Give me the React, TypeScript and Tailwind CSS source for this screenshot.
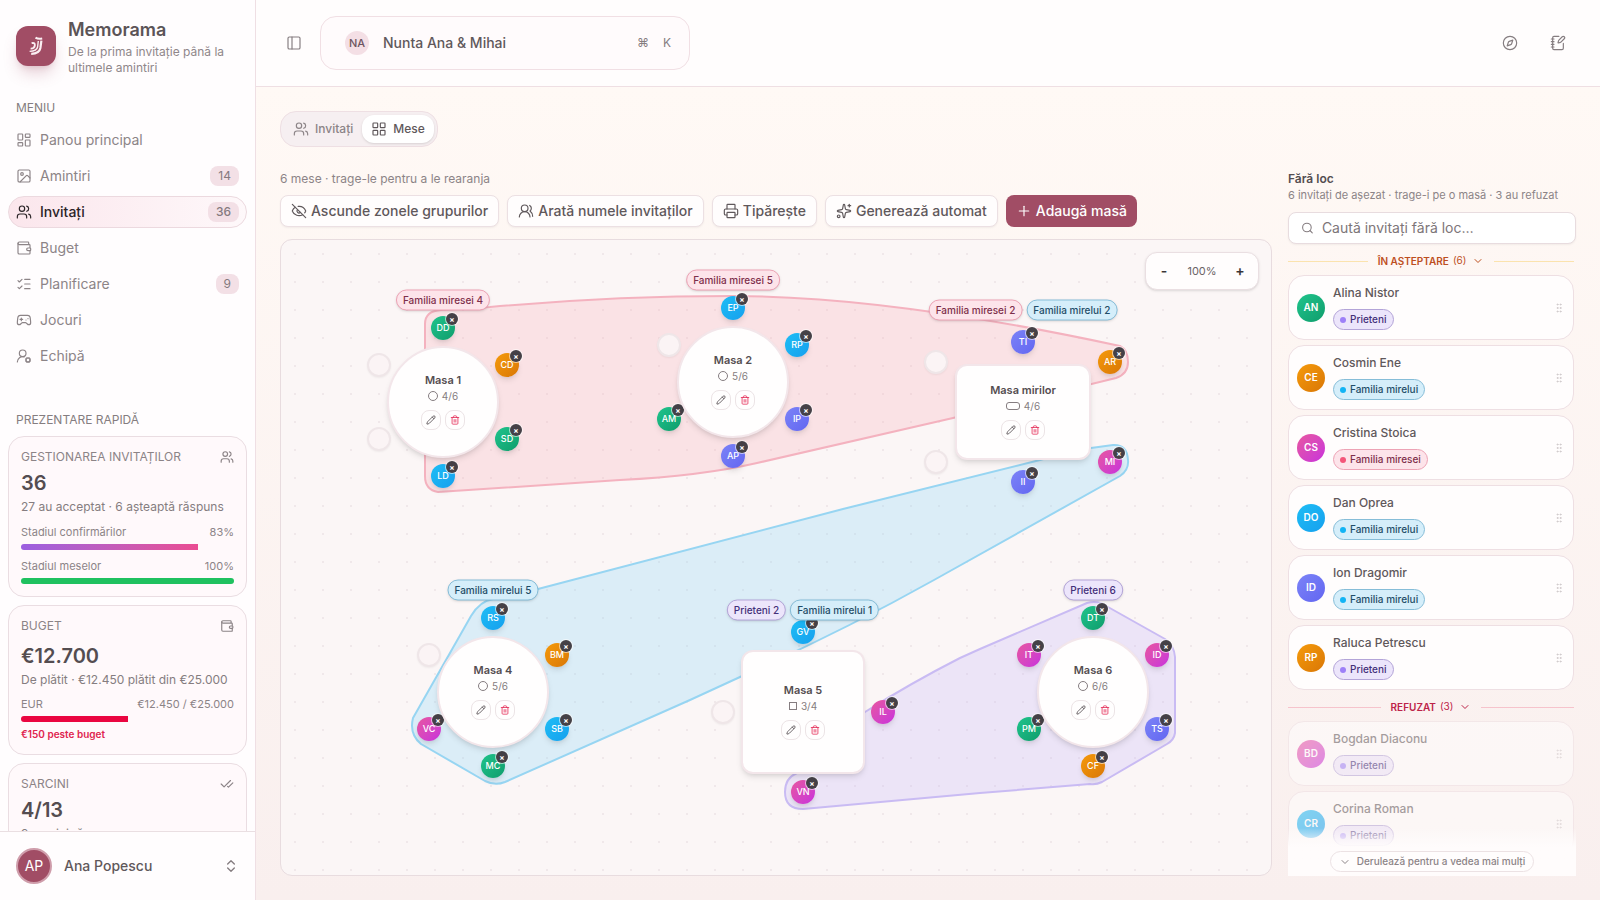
import type { ReactNode } from 'react';
import clsx from 'clsx';
import {
  CheckCheck,
  ChevronDown,
  ChevronsUpDown,
  Compass,
  EyeOff,
  Gamepad2,
  GripVertical,
  Image,
  LayoutDashboard,
  LayoutGrid,
  ListChecks,
  NotebookPen,
  PanelLeft,
  Pencil,
  Plus,
  Printer,
  Search,
  Sparkles,
  Trash2,
  UserRoundCog,
  Users,
  UsersRound,
  Wallet,
  type LucideIcon,
} from 'lucide-react';

type Color = 'green' | 'orange' | 'sky' | 'indigo' | 'pink';
type GroupKey = 'miresei' | 'mirelui' | 'prieteni';

const avatarColors: Record<Color, string> = {
  green: 'from-[#20c48c] to-[#0f9d6c]',
  orange: 'from-[#f59a0b] to-[#d97706]',
  sky: 'from-[#1fbdf5] to-[#16a0ee]',
  indigo: 'from-[#7c83f7] to-[#6366f1]',
  pink: 'from-[#e8559f] to-[#c92fdc]',
};

const groups: Record<GroupKey, { name: string; pill: string; dot: string }> = {
  miresei: {
    name: 'Familia miresei',
    pill: 'bg-[#fde4ea] border-[#eda3b5] text-[#7d2f4b]',
    dot: 'bg-[#f4567a]',
  },
  mirelui: {
    name: 'Familia mirelui',
    pill: 'bg-[#d5eefa] border-[#86bdd8] text-[#1f4d68]',
    dot: 'bg-[#12b4f5]',
  },
  prieteni: {
    name: 'Prieteni',
    pill: 'bg-[#ece5fb] border-[#b3a4d8] text-[#432f79]',
    dot: 'bg-[#9d80f8]',
  },
};

interface NavItem {
  label: string;
  icon: LucideIcon;
  count?: number;
  active?: boolean;
}

const navItems: NavItem[] = [
  { label: 'Panou principal', icon: LayoutDashboard },
  { label: 'Amintiri', icon: Image, count: 14 },
  { label: 'Invitați', icon: Users, count: 36, active: true },
  { label: 'Buget', icon: Wallet },
  { label: 'Planificare', icon: ListChecks, count: 9 },
  { label: 'Jocuri', icon: Gamepad2 },
  { label: 'Echipă', icon: UserRoundCog },
];

interface Seat {
  x: number;
  y: number;
  initials?: string;
  color?: Color;
}

interface TableData {
  name: string;
  shape: 'round' | 'rect' | 'square';
  x: number;
  y: number;
  taken: string;
  labels: { group: GroupKey; count: number }[];
  seats: Seat[];
}

// seat positions are relative to the table centre
const tables: TableData[] = [
  {
    name: 'Masa 1', shape: 'round', x: 162, y: 162, taken: '4/6',
    labels: [{ group: 'miresei', count: 4 }],
    seats: [
      { x: 0, y: -74, initials: 'DD', color: 'green' },
      { x: 64, y: -37, initials: 'CD', color: 'orange' },
      { x: 64, y: 37, initials: 'SD', color: 'green' },
      { x: 0, y: 74, initials: 'LD', color: 'sky' },
      { x: -64, y: 37 },
      { x: -64, y: -37 },
    ],
  },
  {
    name: 'Masa 2', shape: 'round', x: 452, y: 142, taken: '5/6',
    labels: [{ group: 'miresei', count: 5 }],
    seats: [
      { x: 0, y: -74, initials: 'EP', color: 'sky' },
      { x: 64, y: -37, initials: 'RP', color: 'sky' },
      { x: 64, y: 37, initials: 'IP', color: 'indigo' },
      { x: 0, y: 74, initials: 'AP', color: 'indigo' },
      { x: -64, y: 37, initials: 'AM', color: 'green' },
      { x: -64, y: -37 },
    ],
  },
  {
    name: 'Masa mirilor', shape: 'rect', x: 742, y: 172, taken: '4/6',
    labels: [{ group: 'miresei', count: 2 }, { group: 'mirelui', count: 2 }],
    seats: [
      { x: 0, y: -70, initials: 'TI', color: 'indigo' },
      { x: 87, y: -50, initials: 'AR', color: 'orange' },
      { x: 87, y: 50, initials: 'MI', color: 'pink' },
      { x: 0, y: 70, initials: 'II', color: 'indigo' },
      { x: -87, y: 50 },
      { x: -87, y: -50 },
    ],
  },
  {
    name: 'Masa 4', shape: 'round', x: 212, y: 452, taken: '5/6',
    labels: [{ group: 'mirelui', count: 5 }],
    seats: [
      { x: 0, y: -74, initials: 'RS', color: 'sky' },
      { x: 64, y: -37, initials: 'BM', color: 'orange' },
      { x: 64, y: 37, initials: 'SB', color: 'sky' },
      { x: 0, y: 74, initials: 'MC', color: 'green' },
      { x: -64, y: 37, initials: 'VC', color: 'pink' },
      { x: -64, y: -37 },
    ],
  },
  {
    name: 'Masa 5', shape: 'square', x: 522, y: 472, taken: '3/4',
    labels: [{ group: 'prieteni', count: 2 }, { group: 'mirelui', count: 1 }],
    seats: [
      { x: 0, y: -80, initials: 'GV', color: 'sky' },
      { x: 80, y: 0, initials: 'IL', color: 'pink' },
      { x: 0, y: 80, initials: 'VN', color: 'pink' },
      { x: -80, y: 0 },
    ],
  },
  {
    name: 'Masa 6', shape: 'round', x: 812, y: 452, taken: '6/6',
    labels: [{ group: 'prieteni', count: 6 }],
    seats: [
      { x: 0, y: -74, initials: 'DT', color: 'green' },
      { x: 64, y: -37, initials: 'ID', color: 'pink' },
      { x: 64, y: 37, initials: 'TS', color: 'indigo' },
      { x: 0, y: 74, initials: 'CF', color: 'orange' },
      { x: -64, y: 37, initials: 'PM', color: 'green' },
      { x: -64, y: -37, initials: 'IT', color: 'pink' },
    ],
  },
];

interface Guest {
  name: string;
  initials: string;
  color: Color;
  group: GroupKey;
}

const pendingGuests: Guest[] = [
  { name: 'Alina Nistor', initials: 'AN', color: 'green', group: 'prieteni' },
  { name: 'Cosmin Ene', initials: 'CE', color: 'orange', group: 'mirelui' },
  { name: 'Cristina Stoica', initials: 'CS', color: 'pink', group: 'miresei' },
  { name: 'Dan Oprea', initials: 'DO', color: 'sky', group: 'mirelui' },
  { name: 'Ion Dragomir', initials: 'ID', color: 'indigo', group: 'mirelui' },
  { name: 'Raluca Petrescu', initials: 'RP', color: 'orange', group: 'prieteni' },
];

const declinedGuests: Guest[] = [
  { name: 'Bogdan Diaconu', initials: 'BD', color: 'pink', group: 'prieteni' },
  { name: 'Corina Roman', initials: 'CR', color: 'sky', group: 'prieteni' },
];

const Logo = () => (
  <div className="flex size-10 shrink-0 items-center justify-center rounded-xl bg-[#a14d65] shadow-lg shadow-[#a14d65]/25">
    <svg viewBox="0 0 16 20" className="h-5 w-4" fill="none" stroke="#fbeef2">
      <path d="M7.5 1.6 Q10 3.4 14.2 2.6" strokeWidth="2" />
      <path d="M13.4 4.6 L12.4 12 Q11.4 17.6 3.2 17.8" strokeWidth="2.2" />
      <path d="M10.3 5 L9.6 11 Q8.8 15 1.6 15.4" strokeWidth="1.4" />
      <path d="M3.6 7.2 Q7.2 6.2 6.8 9.6 Q6.2 12.8 2.6 12.6" strokeWidth="1.9" />
    </svg>
  </div>
);

interface StatCardProps {
  title: string;
  icon: LucideIcon;
  value: string;
  spaced?: boolean;
  children: ReactNode;
}

const StatCard = ({ title, icon: Icon, value, spaced, children }: StatCardProps) => (
  <section className="rounded-2xl border border-[#eadde2] bg-[#fff9fb] p-3">
    <div className="flex items-center justify-between text-[#8c8487]">
      <h3 className="text-xs">{title}</h3>
      <Icon className="size-3.5" />
    </div>
    <p className={clsx('text-xl leading-7 font-semibold text-[#544d50]', spaced ? 'mt-2' : 'mt-1')}>{value}</p>
    {children}
  </section>
);

const Sidebar = () => (
  <aside className="sticky top-0 flex h-screen w-64 shrink-0 flex-col border-r border-[#efdfe4] bg-[#fffdfe]">
    <div className="flex items-center gap-3 px-4 pt-4">
      <Logo />
      <div>
        <h1 className="text-lg leading-7 font-semibold text-[#5b5457]">Memorama</h1>
        <p className="text-xs text-[#8f878a]">De la prima invitație până la ultimele amintiri</p>
      </div>
    </div>

    <h2 className="mt-6 px-4 text-xs leading-4 text-[#857d80]">MENIU</h2>
    <nav className="mt-2 flex flex-col gap-1 px-2">
      {navItems.map(({ label, icon: Icon, count, active }) => (
        <a
          key={label}
          href="#"
          className={clsx(
            'flex h-8 items-center gap-2 rounded-2xl border px-[7px] text-sm',
            active
              ? 'border-[#ecd9df] bg-linear-to-r from-[#fbe6ec] to-[#fef8fa] font-medium text-[#2b2427]'
              : 'border-transparent text-[#8c8487]'
          )}
        >
          <Icon className="size-4" strokeWidth={1.75} />
          <span className="flex-1">{label}</span>
          {count && (
            <span className="rounded-lg bg-[#f3e0e6] px-2 text-xs leading-5 text-[#857a7e]">{count}</span>
          )}
        </a>
      ))}
    </nav>

    <h2 className="mt-10 px-4 text-xs leading-4 text-[#857d80]">PREZENTARE RAPIDĂ</h2>
    <div className="mt-2 flex min-h-0 flex-1 flex-col gap-2 overflow-hidden px-2">
      <StatCard title="GESTIONAREA INVITAȚILOR" icon={Users} value="36">
        <p className="mt-0.5 text-xs text-[#857d80]">27 au acceptat · 6 așteaptă răspuns</p>
        <div className="mt-[9px] flex justify-between text-[11px] leading-4 text-[#8c8487]">
          <span>Stadiul confirmărilor</span>
          <span>83%</span>
        </div>
        <div className="mt-1 h-1.5 overflow-hidden rounded-full">
          <div className="h-full w-[83%] bg-linear-to-r from-[#9b5fe0] to-[#ea4c92]" />
        </div>
        <div className="mt-2 flex justify-between text-[11px] leading-4 text-[#8c8487]">
          <span>Stadiul meselor</span>
          <span>100%</span>
        </div>
        <div className="mt-1 h-1.5 rounded-full bg-[#1fc15f]" />
      </StatCard>
      <StatCard title="BUGET" icon={Wallet} value="€12.700" spaced>
        <p className="mt-0.5 text-xs text-[#857d80]">De plătit · €12.450 plătit din €25.000</p>
        <div className="mt-2 flex justify-between text-[11px] leading-4 text-[#8c8487]">
          <span>EUR</span>
          <span>€12.450 / €25.000</span>
        </div>
        <div className="mt-1 h-1.5 overflow-hidden rounded-full">
          <div className="h-full w-1/2 bg-[#ea0640]" />
        </div>
        <p className="mt-1 text-[10px] leading-4 font-semibold text-[#e0244f]">€150 peste buget</p>
      </StatCard>
      <StatCard title="SARCINI" icon={CheckCheck} value="4/13">
        <p className="mt-0.5 text-xs text-[#857d80]">9 sarcini rămase</p>
      </StatCard>
    </div>

    <button className="flex h-[69px] shrink-0 items-center gap-3 border-t border-[#eadfe2] bg-[#fffdfe] px-4 text-left">
      <span className="flex size-9 items-center justify-center rounded-full border-2 border-[#cf9dab] bg-[#a14d65] text-sm text-white">AP</span>
      <span className="flex-1 text-sm font-medium text-[#5f585b]">Ana Popescu</span>
      <ChevronsUpDown className="size-4 text-[#857d80]" />
    </button>
  </aside>
);

const Header = () => (
  <header className="flex h-[87px] items-center border-b border-[#efdfe3] bg-[#fffdfd] pr-[26px] pl-6">
    <button aria-label="Comută bara laterală" className="flex size-7 items-center justify-center text-[#857d80]">
      <PanelLeft className="size-4" strokeWidth={1.75} />
    </button>
    <button className="ml-3 flex h-[54px] w-[370px] items-center rounded-2xl border border-[#f1dfe4] bg-[#fffbfc] pr-2.5 pl-6">
      <span className="flex size-6 items-center justify-center rounded-full bg-[#f4dfe5] text-[11px] font-medium text-[#6d5560]">NA</span>
      <span className="ml-3.5 flex-1 text-left text-sm font-medium text-[#5f585b]">Nunta Ana &amp; Mihai</span>
      <kbd className="w-6 text-center font-[Inter] text-xs text-[#857d80]">⌘</kbd>
      <kbd className="w-6 text-center font-[Inter] text-xs text-[#857d80]">K</kbd>
    </button>
    <div className="ml-auto flex gap-4 text-[#857d80]">
      <button aria-label="Tur ghidat" className="flex size-8 items-center justify-center">
        <Compass className="size-4" strokeWidth={1.75} />
      </button>
      <button aria-label="Notițe" className="flex size-8 items-center justify-center">
        <NotebookPen className="size-4" strokeWidth={1.75} />
      </button>
    </div>
  </header>
);

const ToolButton = ({ icon: Icon, label }: { icon: LucideIcon; label: string }) => (
  <button className="flex h-8 items-center gap-1 rounded-lg border border-[#ece0e3] bg-[#fffdfd] px-2.5 text-sm font-medium text-[#5f585b] shadow-xs">
    <Icon className="size-4" strokeWidth={1.75} />
    {label}
  </button>
);

const GroupZones = () => (
  <svg className="absolute top-0 left-0 h-[636px] w-[992px]" strokeWidth="2" strokeLinejoin="round">
    <path
      d="M144 84 Q144 71 160 70 L209 67 Q330 56 452 56 C570 56 700 76 839 106 Q847 110 847 122 Q847 134 835 138 L672 178 L476 223 Q420 236 339 240 L157 252 Q144 250 144 236 Z"
      fill="#f7a8b4"
      fillOpacity="0.25"
      stroke="#f4b2bf"
    />
    <path
      d="M190 376 L132 478 Q128 494 140 504 L204 541 Q214 546 224 542 L409 460 L459 437 Q560 392 653 340 L839 236 Q848 230 847 220 Q846 204 832 205 L810 208 Q785 212 759 220 L562 269 L257 349 L212 359 Q199 361 190 376 Z"
      fill="#7dd3fc"
      fillOpacity="0.25"
      stroke="#97d5f2"
    />
    <path
      d="M504 552 Q504 538 516 533 L584 472 Q630 443 679 418 L699 409 L806 363 Q818 360 827 367 L884 399 Q893 405 894 417 L894 493 Q893 500 886 504 L821 542 Q815 545 809 544 L699 553 L522 569 Q504 569 504 552 Z"
      fill="#c4b5fd"
      fillOpacity="0.27"
      stroke="#c9bbf3"
    />
  </svg>
);

const SeatDot = ({ seat }: { seat: Seat }) => (
  <div className="absolute size-6 -translate-1/2" style={{ left: seat.x, top: seat.y }}>
    {seat.initials && seat.color ? (
      <>
        <span
          className={clsx(
            'flex size-6 items-center justify-center rounded-full bg-linear-to-br text-[9px] font-medium text-white shadow-md',
            avatarColors[seat.color]
          )}
        >
          {seat.initials}
        </span>
        <button
          aria-label={`Elimină ${seat.initials}`}
          className="absolute -top-[3px] -right-[3px] flex size-3 items-center justify-center rounded-full bg-[#454147] text-[8px] leading-none font-semibold text-white ring-1 ring-white/60"
        >
          ×
        </button>
      </>
    ) : (
      <span className="block size-6 rounded-full border-2 border-[#efe6e8] bg-[#fbf4f5] shadow-xs" />
    )}
  </div>
);

const SeatTable = ({ table }: { table: TableData }) => (
  <div className="absolute size-0" style={{ left: table.x, top: table.y }}>
    {table.seats.map((seat, i) => (
      <SeatDot key={i} seat={seat} />
    ))}
    <div
      className={clsx(
        'absolute flex -translate-1/2 flex-col items-center justify-center border-2 border-[#f3e6ea] bg-[#fffefe] pb-0.5 shadow-md',
        table.shape === 'round' && 'size-28 rounded-full',
        table.shape === 'rect' && 'h-24 w-[136px] rounded-xl',
        table.shape === 'square' && 'size-[124px] rounded-xl'
      )}
    >
      <p className="text-[11px] leading-4 font-semibold text-[#544d50]">{table.name}</p>
      <p className="flex items-center gap-1 text-[10px] leading-4 text-[#857d80]">
        <span
          className={clsx(
            'border border-[#857d80]',
            table.shape === 'round' && 'size-2.5 rounded-full',
            table.shape === 'rect' && 'h-2 w-3.5 rounded-[3px]',
            table.shape === 'square' && 'size-2'
          )}
        />
        {table.taken}
      </p>
      <div className="mt-1.5 flex gap-1">
        <button aria-label={`Editează ${table.name}`} className="flex size-5 items-center justify-center rounded-lg border border-[#ece4e6] text-[#544d50]">
          <Pencil className="size-2.5" />
        </button>
        <button aria-label={`Șterge ${table.name}`} className="flex size-5 items-center justify-center rounded-lg border border-[#ece4e6] text-[#e5335c]">
          <Trash2 className="size-2.5" />
        </button>
      </div>
    </div>
    <div className="absolute -top-[102px] flex -translate-1/2 gap-1">
      {table.labels.map(({ group, count }) => (
        <span
          key={group}
          className={clsx('flex h-[21px] items-center rounded-full border px-1.5 text-[10px] font-medium whitespace-nowrap shadow-sm', groups[group].pill)}
        >
          {groups[group].name} {count}
        </span>
      ))}
    </div>
  </div>
);

const FloorPlan = () => (
  <div className="relative mt-3 min-h-[600px] flex-1 overflow-hidden rounded-xl border border-[#e8dcdf] bg-[#fbf6f6] bg-[radial-gradient(circle,#f0e8ea_1px,transparent_1px)] bg-size-[28px_28px]">
    <GroupZones />
    {tables.map((table) => (
      <SeatTable key={table.name} table={table} />
    ))}
    <div className="absolute top-3 right-3 flex h-[38px] items-center rounded-xl border border-[#eadfe2] bg-[#fffdfd] px-1.5 text-xs shadow-sm">
      <button aria-label="Micșorează" className="size-6 text-sm font-semibold text-[#3b3538]">-</button>
      <span className="w-[52px] text-center text-[11px] text-[#6b6467]">100%</span>
      <button aria-label="Mărește" className="size-6 text-sm font-semibold text-[#3b3538]">+</button>
    </div>
  </div>
);

const GuestCard = ({ guest, faded }: { guest: Guest; faded?: boolean }) => {
  const group = groups[guest.group];

  return (
    <li className={clsx('flex h-[65px] shrink-0 items-center gap-2 rounded-2xl border border-[#eedfe3] bg-[#fffdfd] px-2', faded && 'opacity-55')}>
      <span
        className={clsx(
          'flex size-7 items-center justify-center rounded-full bg-linear-to-br text-[10px] font-semibold text-white',
          avatarColors[guest.color]
        )}
      >
        {guest.initials}
      </span>
      <div className="flex flex-1 flex-col items-start gap-2">
        <p className="text-xs font-medium text-[#5f585b]">{guest.name}</p>
        <span className={clsx('flex h-[21px] items-center gap-1 rounded-full border px-1.5 text-[10px] font-medium', group.pill)}>
          <span className={clsx('size-1.5 rounded-full', group.dot)} />
          {group.name}
        </span>
      </div>
      <GripVertical className="size-3 text-[#d0c9cb]" />
    </li>
  );
};

const SectionDivider = ({ title, count, text, line }: { title: string; count: number; text: string; line: string }) => (
  <button className="flex h-4 w-full items-center gap-2.5">
    <span className={clsx('h-px flex-1', line)} />
    <span className={clsx('flex items-center gap-1 text-[10px] font-semibold', text)}>
      {title}
      <span className="mb-0.5 font-normal">({count})</span>
      <ChevronDown className="ml-0.5 size-3" />
    </span>
    <span className={clsx('h-px flex-1', line)} />
  </button>
);

const UnseatedPanel = () => (
  <aside className="flex w-72 shrink-0 flex-col">
    <h2 className="text-xs leading-4 font-semibold text-[#544d50]">Fără loc</h2>
    <p className="text-[11px] leading-4 text-[#8c8487]">6 invitați de așezat · trage-i pe o masă · 3 au refuzat</p>
    <label className="mt-[9px] flex h-8 items-center gap-2 rounded-lg border border-[#e8dcdf] bg-white px-3 shadow-xs">
      <Search className="size-3.5 text-[#857d80]" />
      <input
        type="search"
        aria-label="Caută invitați fără loc"
        placeholder="Caută invitați fără loc…"
        className="w-full bg-transparent text-sm outline-none placeholder:text-[#7d7578]"
      />
    </label>
    <div className="relative mt-[9px] min-h-0 flex-1 overflow-hidden">
      <div className="absolute inset-0 overflow-hidden pr-0.5">
        <SectionDivider title="ÎN AȘTEPTARE" count={6} text="text-[#bd4f1e]" line="bg-[#fbe3ae]" />
        <ul className="mt-1.5 flex flex-col gap-[5px]">
          {pendingGuests.map((guest) => (
            <GuestCard key={guest.name} guest={guest} />
          ))}
        </ul>
        <div className="mt-[9px]">
          <SectionDivider title="REFUZAT" count={3} text="text-[#bd2348]" line="bg-[#f6c3cc]" />
        </div>
        <ul className="mt-1.5 flex flex-col gap-[5px]">
          {declinedGuests.map((guest) => (
            <GuestCard key={guest.name} guest={guest} faded />
          ))}
        </ul>
      </div>
      <div className="absolute inset-x-0 bottom-0 flex h-12 items-end justify-center bg-linear-to-t from-[#fffcfc] from-60% to-transparent pb-1">
        <button className="flex h-[21px] items-center gap-1.5 rounded-full border border-[#ece2e4] bg-[#fffdfd] px-2 text-[10px] font-medium text-[#8c8487]">
          <ChevronDown className="size-3" />
          Derulează pentru a vedea mai mulți
        </button>
      </div>
    </div>
  </aside>
);

const App = () => {
  return (
    <div className="flex min-h-screen bg-[#fff8f6] font-['Inter','Liberation_Sans',sans-serif]">
      <Sidebar />
      <div className="flex min-w-0 flex-1 flex-col">
        <Header />
        <main className="flex flex-1 flex-col bg-linear-to-b from-[#fff9f5] to-[#f9efee] p-6">
          <div role="tablist" className="flex h-9 items-center self-start rounded-2xl border border-[#eedfe3] bg-[#f6eff1] p-[3px] text-xs font-medium">
            <button role="tab" className="flex h-7 items-center gap-1.5 px-[9px] text-[#8c8487]">
              <Users className="size-4" strokeWidth={1.75} />
              Invitați
            </button>
            <button role="tab" aria-selected="true" className="flex h-7 items-center gap-1.5 rounded-xl bg-white px-[9px] text-[#5f585b] shadow-sm">
              <LayoutGrid className="size-4" strokeWidth={1.75} />
              Mese
            </button>
          </div>

          <div className="mt-6 flex flex-1 gap-4">
            <section className="flex min-w-0 flex-1 flex-col">
              <p className="text-xs leading-4 text-[#8c8487]">6 mese · trage-le pentru a le rearanja</p>
              <div className="mt-2 flex flex-wrap gap-2">
                <ToolButton icon={EyeOff} label="Ascunde zonele grupurilor" />
                <ToolButton icon={UsersRound} label="Arată numele invitaților" />
                <ToolButton icon={Printer} label="Tipărește" />
                <ToolButton icon={Sparkles} label="Generează automat" />
                <button className="flex h-8 items-center gap-1 rounded-lg bg-[#a14d65] px-2.5 text-sm font-medium text-white">
                  <Plus className="size-4" strokeWidth={1.75} />
                  Adaugă masă
                </button>
              </div>
              <FloorPlan />
            </section>
            <UnseatedPanel />
          </div>
        </main>
      </div>
    </div>
  );
};

export default App;
